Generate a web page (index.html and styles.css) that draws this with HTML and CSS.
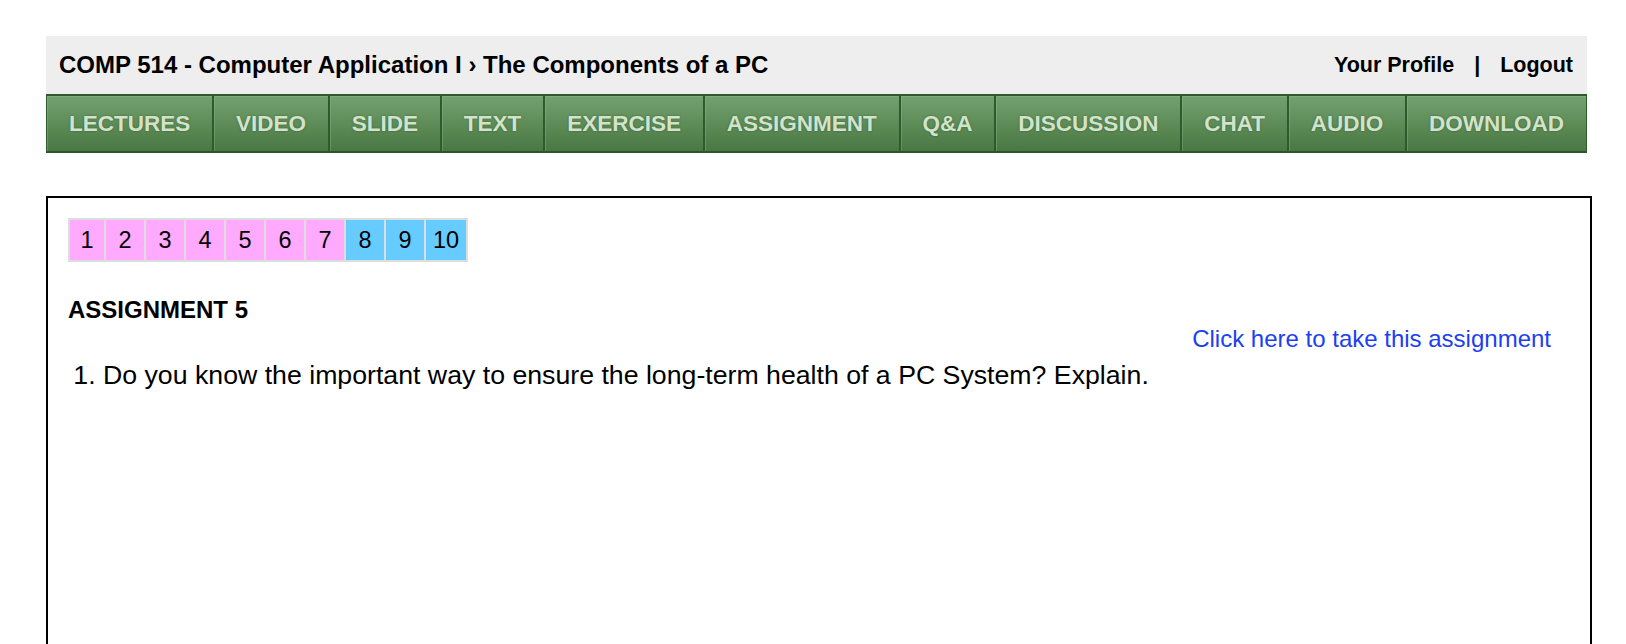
FILE: index.html
```html
<!DOCTYPE html>
<html lang="en">
<head>
<meta charset="utf-8">
<title>COMP 514 - The Components of a PC</title>
<link rel="stylesheet" href="styles.css">
</head>
<body>
<div class="page">
  <header class="topbar">
    <div class="crumb">COMP 514 - Computer Application I › The Components of a PC</div>
    <div class="userlinks">
      <a href="#" class="ulink">Your Profile</a>
      <span class="sep">|</span>
      <a href="#" class="ulink">Logout</a>
    </div>
  </header>
  <nav class="menu">
    <a href="#" class="menu-item">LECTURES</a>
    <a href="#" class="menu-item">VIDEO</a>
    <a href="#" class="menu-item">SLIDE</a>
    <a href="#" class="menu-item">TEXT</a>
    <a href="#" class="menu-item">EXERCISE</a>
    <a href="#" class="menu-item">ASSIGNMENT</a>
    <a href="#" class="menu-item">Q&amp;A</a>
    <a href="#" class="menu-item">DISCUSSION</a>
    <a href="#" class="menu-item">CHAT</a>
    <a href="#" class="menu-item">AUDIO</a>
    <a href="#" class="menu-item">DOWNLOAD</a>
  </nav>
  <main class="box">
    <div class="pager">
      <a href="#" class="pg pg-done">1</a>
      <a href="#" class="pg pg-done">2</a>
      <a href="#" class="pg pg-done">3</a>
      <a href="#" class="pg pg-done">4</a>
      <a href="#" class="pg pg-done">5</a>
      <a href="#" class="pg pg-done">6</a>
      <a href="#" class="pg pg-done">7</a>
      <a href="#" class="pg pg-todo">8</a>
      <a href="#" class="pg pg-todo">9</a>
      <a href="#" class="pg pg-todo">10</a>
    </div>
    <h2 class="asg-title">ASSIGNMENT 5</h2>
    <div class="take"><a href="#" class="take-link">Click here to take this assignment</a></div>
    <ol class="questions">
      <li>Do you know the important way to ensure the long-term health of a PC System? Explain.</li>
    </ol>
  </main>
</div>
</body>
</html>
```
FILE: styles.css
```css
html, body {
  margin: 0;
  padding: 0;
  background: #ffffff;
}
body {
  font-family: "Liberation Sans", Arial, Helvetica, sans-serif;
  color: #000;
}
.page {
  padding: 36px 0 0 46px;
}
.topbar {
  width: 1541px;
  height: 58px;
  box-sizing: border-box;
  background: #eeeeee;
  display: flex;
  align-items: center;
  justify-content: space-between;
  padding: 0 14px 0 13px;
}
.crumb {
  font-size: 24px;
  font-weight: bold;
}
.userlinks {
  display: flex;
  align-items: center;
  gap: 20px;
  font-size: 21.5px;
  font-weight: bold;
}
.ulink {
  color: #000;
  text-decoration: none;
}
.sep {
  color: #000;
}
.menu {
  width: 1541px;
  height: 59px;
  display: flex;
  box-sizing: border-box;
}
.menu-item {
  flex: 1 1 auto;
  display: flex;
  align-items: center;
  justify-content: center;
  font-size: 22.5px;
  font-weight: bold;
  color: #d2e3cc;
  text-decoration: none;
  text-shadow: 0 0 2px rgba(30, 60, 30, 0.6);
  background: linear-gradient(#74a171 0%, #65935f 35%, #55844f 70%, #497845 100%);
  border: 1px solid #2e5b2c;
  border-top: 2px solid #2f5a2c;
  border-bottom: 2px solid #2d552a;
  box-shadow: inset 1px 1px 0 rgba(160, 200, 150, 0.3);
  box-sizing: border-box;
}
.box {
  margin-top: 43px;
  width: 1546px;
  min-height: 520px;
  box-sizing: border-box;
  border: 2px solid #000;
  padding: 20px 20px 20px 20px;
}
.pager {
  display: inline-grid;
  grid-template-columns: 34px repeat(8, 38px) 40px;
  grid-auto-rows: 40px;
  gap: 2px;
  padding: 2px;
  background: #dddddd;
}
.pg {
  display: flex;
  align-items: center;
  justify-content: center;
  font-size: 23.5px;
  color: #000;
  text-decoration: none;
}
.pg-done {
  background: #ffaaff;
}
.pg-todo {
  background: #66ccff;
}
.asg-title {
  margin: 34px 0 0 0;
  font-size: 24px;
  line-height: 28px;
  font-weight: bold;
}
.take {
  text-align: right;
  padding-right: 19px;
  font-size: 24px;
  line-height: 28px;
  margin-top: 1px;
}
.take-link {
  color: #2040f0;
  text-decoration: none;
}
.questions {
  margin: 7px 0 0 0;
  padding-left: 35px;
  font-size: 26.7px;
  line-height: 31px;
}
```
